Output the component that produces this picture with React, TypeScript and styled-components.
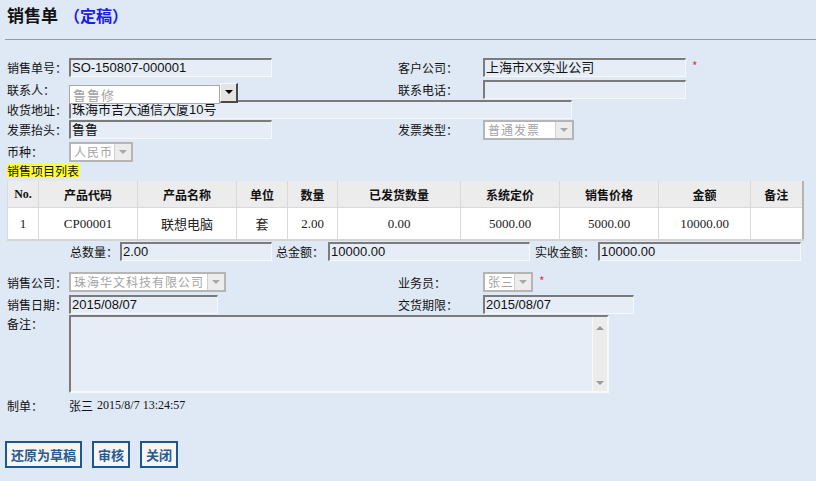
import { FC } from "react";
import styled, { createGlobalStyle } from "styled-components";

const CJK = `"Noto Sans CJK SC", "Liberation Sans", sans-serif`;
const SANS = `"Liberation Sans", "Noto Sans CJK SC", sans-serif`;
const SERIF = `"Liberation Serif", "Noto Sans CJK SC", serif`;

const Global = createGlobalStyle`
	html, body {
		margin:0;
		padding:0;
		background:#dfe9f5;
	}
	body {
		font-family:${CJK};
		font-size:12px;
		color:#111;
		width:816px;
		height:481px;
		overflow:hidden;
	}
`;

const Page = styled.div`
	padding:0 0 0 7px;
`;

const Header = styled.div`
	height:40px;
	margin-left:-2px;
	padding-left:2px;
	border-bottom:1px solid #9a9a9a;
	display:flex;
	align-items:center;
	box-sizing:border-box;
	padding-bottom:10px;
	gap:6px;
`;

const Title = styled.span`
	font-size:17px;
	font-weight:bold;
	color:#111;
`;

const Status = styled.span`
	font-size:16px;
	font-weight:bold;
	color:#1c1ce8;
`;

const Form = styled.div`
	margin-top:16px;
	display:flex;
	flex-direction:column;
`;

const Row = styled.div<{ $h:number; $top?:boolean }>`
	display:flex;
	align-items:${p => p.$top ? "flex-start" : "center"};
	height:${p => p.$h}px;
`;

const Cell = styled.div<{ $w?:number }>`
	display:flex;
	align-items:center;
	width:${p => p.$w ? `${p.$w}px` : "auto"};
	flex:${p => p.$w ? "none" : "1"};
	position:relative;
`;

const Label = styled.span<{ $w:number; $right?:boolean }>`
	width:${p => p.$w}px;
	flex:none;
	white-space:nowrap;
	text-align:${p => p.$right ? "right" : "left"};
	font-size:12px;
`;

const Input = styled.div<{ $w:number }>`
	width:${p => p.$w}px;
	height:19px;
	box-sizing:border-box;
	background:#e6edf7;
	border-top:2px solid #7b7b7b;
	border-left:2px solid #7b7b7b;
	border-right:1px solid #f6f8fb;
	border-bottom:1px solid #f6f8fb;
	font-family:${SANS};
	font-size:13px;
	line-height:16px;
	padding-left:1px;
	white-space:nowrap;
	overflow:hidden;
	color:#111;
`;

const Required = styled.span`
	color:#ee3344;
	font-size:12px;
	margin-left:6px;
	margin-top:-4px;
`;

const SelectBox = styled.div<{ $w:number }>`
	width:${p => p.$w}px;
	height:20px;
	box-sizing:border-box;
	display:flex;
	border:2px solid #b5b5b5;
	background:#fff;
`;

const SelectText = styled.span`
	flex:1;
	color:#a3a3a3;
	font-size:12px;
	line-height:16px;
	padding-left:3px;
	letter-spacing:1px;
	white-space:nowrap;
	overflow:hidden;
`;

const SelectArrow = styled.span`
	width:16px;
	flex:none;
	background:#ececec;
	border-left:1px solid #d0d0d0;
	display:flex;
	align-items:center;
	justify-content:center;
	&::after {
		content:"";
		border-left:4px solid transparent;
		border-right:4px solid transparent;
		border-top:4px solid #a8a8a8;
	}
`;

const Combo = styled.div`
	display:flex;
	align-items:flex-start;
	margin-top:10px;
	position:relative;
	z-index:1;
`;

const ComboText = styled.div`
	width:151px;
	height:19px;
	box-sizing:border-box;
	background:#fff;
	border:1px solid #a8a8a8;
	color:#a3a3a3;
	font-size:13px;
	line-height:17px;
	padding-left:3px;
	letter-spacing:1px;
`;

const ComboButton = styled.div`
	width:18px;
	height:20px;
	box-sizing:border-box;
	margin-top:-2px;
	background:#e4e4e4;
	border-top:1px solid #f8f8f8;
	border-left:1px solid #f8f8f8;
	border-right:2px solid #4a4a4a;
	border-bottom:2px solid #4a4a4a;
	display:flex;
	align-items:center;
	justify-content:center;
	&::after {
		content:"";
		border-left:4px solid transparent;
		border-right:4px solid transparent;
		border-top:4px solid #000;
	}
`;

const SectionTitle = styled.div`
	margin-top:1px;
	height:14px;
	line-height:14px;
	font-size:12px;
	background:#ffff33;
	align-self:flex-start;
	padding-right:1px;
`;

const Grid = styled.table`
	margin-top:3px;
	width:795px;
	border-collapse:collapse;
	table-layout:fixed;
	border-left:1px solid #cfcfcf;
	border-right:2px solid #b3b3b3;
	border-bottom:2px solid #d4d4d4;
`;

const Th = styled.th<{ $serif?:boolean }>`
	height:26px;
	padding:0;
	background:#ececec;
	border:1px solid #d9d9d9;
	border-top:none;
	font-family:${p => p.$serif ? SERIF : CJK};
	font-size:12px;
	font-weight:bold;
	text-align:center;
	color:#111;
`;

const Td = styled.td<{ $cjk?:boolean }>`
	height:31px;
	padding:0;
	background:#fff;
	border:1px solid #d9d9d9;
	font-family:${p => p.$cjk ? CJK : SERIF};
	font-size:13px;
	text-align:center;
	color:#222;
`;

const Totals = styled.div`
	display:grid;
	grid-template-columns:113px 152px 56px 202px 68px 203px;
	align-items:center;
	height:19px;
	margin-top:1px;
`;

const Lower = styled.div`
	margin-top:10px;
	display:flex;
	flex-direction:column;
`;

const TextArea = styled.div`
	width:540px;
	height:78px;
	box-sizing:border-box;
	background:#e6edf7;
	border-top:2px solid #7b7b7b;
	border-left:2px solid #7b7b7b;
	border-right:2px solid #f6f8fb;
	border-bottom:2px solid #f6f8fb;
	display:flex;
	justify-content:flex-end;
`;

const ScrollBar = styled.div`
	width:15px;
	background:#ececec;
	border-left:1px solid #f8f8f8;
	display:flex;
	flex-direction:column;
	justify-content:space-between;
	align-items:center;
	padding:9px 0 6px;
	box-sizing:border-box;
`;

const ScrollArrow = styled.span<{ $up?:boolean }>`
	border-left:4px solid transparent;
	border-right:4px solid transparent;
	${p => p.$up ? "border-bottom:4px solid #9a9a9a;" : "border-top:4px solid #9a9a9a;"}
`;

const Maker = styled.span`
	font-size:12px;
`;

const MakerDate = styled.span`
	font-family:${SERIF};
	font-size:12px;
	margin-left:4px;
`;

const Buttons = styled.div`
	display:flex;
	gap:10px;
	margin-top:26px;
	margin-left:-2px;
`;

const Button = styled.button`
	all:unset;
	height:27px;
	box-sizing:border-box;
	padding:0 4px;
	background:#f5f5f5;
	border:2px solid #1e5690;
	color:#2a5a8e;
	font-family:${CJK};
	font-size:13px;
	font-weight:bold;
	line-height:23px;
	text-align:center;
	cursor:pointer;
`;

const Select:FC<{ w:number; text:string }> = ({ w, text }) => (
	<SelectBox $w={w}>
		<SelectText>{ text }</SelectText>
		<SelectArrow />
	</SelectBox>
);

const columns = [
	{ t:"No.", w:31, serif:true },
	{ t:"产品代码", w:99 },
	{ t:"产品名称", w:99 },
	{ t:"单位", w:51 },
	{ t:"数量", w:50 },
	{ t:"已发货数量", w:123 },
	{ t:"系统定价", w:99 },
	{ t:"销售价格", w:99 },
	{ t:"金额", w:92 },
	{ t:"备注", w:52 },
];

const items = [
	{ no:"1", code:"CP00001", name:"联想电脑", unit:"套", qty:"2.00", sent:"0.00", list:"5000.00", price:"5000.00", amount:"10000.00", memo:"" },
];

export default function App(){
	return (
		<>
			<Global />
			<Page>
				<Header>
					<Title>销售单</Title>
					<Status>（定稿）</Status>
				</Header>

				<Form>
					<Row $h={22}>
						<Cell $w={391}>
							<Label $w={62}>销售单号：</Label>
							<Input $w={203}>SO-150807-000001</Input>
						</Cell>
						<Cell>
							<Label $w={85}>客户公司：</Label>
							<Input $w={203}>上海市XX实业公司</Input>
							<Required>*</Required>
						</Cell>
					</Row>
					<Row $h={22}>
						<Cell $w={391}>
							<Label $w={62}>联系人：</Label>
							<Combo>
								<ComboText>鲁鲁修</ComboText>
								<ComboButton />
							</Combo>
						</Cell>
						<Cell>
							<Label $w={85}>联系电话：</Label>
							<Input $w={203} />
						</Cell>
					</Row>
					<Row $h={19}>
						<Cell>
							<Label $w={62}>收货地址：</Label>
							<Input $w={503}>珠海市吉大通信大厦10号</Input>
						</Cell>
					</Row>
					<Row $h={21}>
						<Cell $w={391}>
							<Label $w={62}>发票抬头：</Label>
							<Input $w={203}>鲁鲁</Input>
						</Cell>
						<Cell>
							<Label $w={85}>发票类型：</Label>
							<Select w={91} text="普通发票" />
						</Cell>
					</Row>
					<Row $h={23}>
						<Cell>
							<Label $w={62}>币种：</Label>
							<Select w={64} text="人民币" />
						</Cell>
					</Row>

					<SectionTitle>销售项目列表</SectionTitle>

					<Grid>
						<colgroup>
							{ columns.map(c => <col key={c.t} style={{ width:c.w }} />) }
						</colgroup>
						<thead>
							<tr>
								{ columns.map(c => <Th key={c.t} $serif={c.serif}>{ c.t }</Th>) }
							</tr>
						</thead>
						<tbody>
							{ items.map(it => (
								<tr key={it.no}>
									<Td>{ it.no }</Td>
									<Td>{ it.code }</Td>
									<Td $cjk>{ it.name }</Td>
									<Td $cjk>{ it.unit }</Td>
									<Td>{ it.qty }</Td>
									<Td>{ it.sent }</Td>
									<Td>{ it.list }</Td>
									<Td>{ it.price }</Td>
									<Td>{ it.amount }</Td>
									<Td>{ it.memo }</Td>
								</tr>
							)) }
						</tbody>
					</Grid>

					<Totals>
						<Label $w={111} $right>总数量：</Label>
						<Input $w={152}>2.00</Input>
						<Label $w={52} $right>总金额：</Label>
						<Input $w={202}>10000.00</Input>
						<Label $w={65} $right>实收金额：</Label>
						<Input $w={203}>10000.00</Input>
					</Totals>
				</Form>

				<Lower>
					<Row $h={22}>
						<Cell $w={391}>
							<Label $w={62}>销售公司：</Label>
							<Select w={157} text="珠海华文科技有限公司" />
						</Cell>
						<Cell>
							<Label $w={85}>业务员：</Label>
							<Select w={50} text="张三" />
							<Required>*</Required>
						</Cell>
					</Row>
					<Row $h={22}>
						<Cell $w={391}>
							<Label $w={62}>销售日期：</Label>
							<Input $w={149}>2015/08/07</Input>
						</Cell>
						<Cell>
							<Label $w={85}>交货期限：</Label>
							<Input $w={151}>2015/08/07</Input>
						</Cell>
					</Row>
					<Row $h={80} $top>
						<Label $w={62}>备注：</Label>
						<TextArea>
							<ScrollBar>
								<ScrollArrow $up />
								<ScrollArrow />
							</ScrollBar>
						</TextArea>
					</Row>
					<Row $h={20}>
						<Label $w={62}>制单：</Label>
						<Maker>张三</Maker>
						<MakerDate>2015/8/7 13:24:57</MakerDate>
					</Row>
				</Lower>

				<Buttons>
					<Button>还原为草稿</Button>
					<Button>审核</Button>
					<Button>关闭</Button>
				</Buttons>
			</Page>
		</>
	);
}
